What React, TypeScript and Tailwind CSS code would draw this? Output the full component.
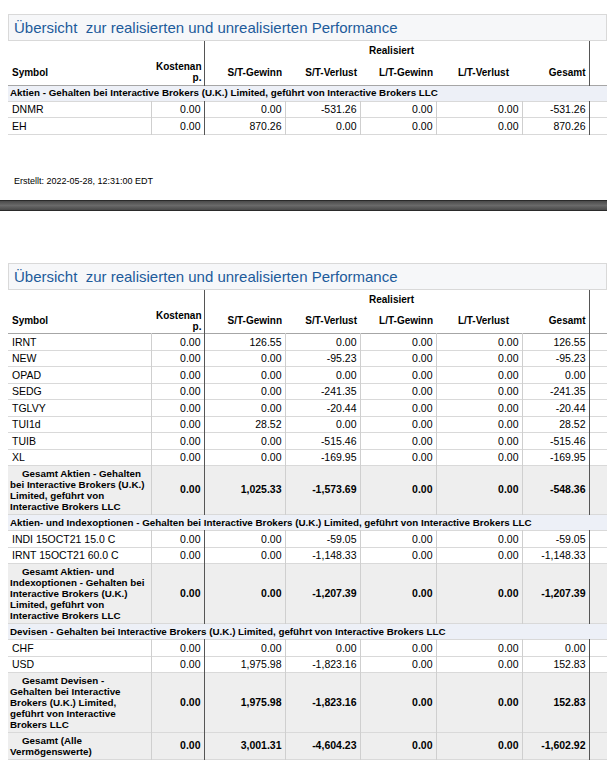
type Cells = [string, string, string, string, string, string];

type Row =
    | { kind: 'section'; label: string }
    | { kind: 'data'; symbol: string; values: Cells }
    | { kind: 'total'; lines: string[]; values: Cells };

const firstRows: Row[] = [
    { kind: 'section', label: 'Aktien - Gehalten bei Interactive Brokers (U.K.) Limited, geführt von Interactive Brokers LLC' },
    { kind: 'data', symbol: 'DNMR', values: ['0.00', '0.00', '-531.26', '0.00', '0.00', '-531.26'] },
    { kind: 'data', symbol: 'EH', values: ['0.00', '870.26', '0.00', '0.00', '0.00', '870.26'] },
];

const secondRows: Row[] = [
    { kind: 'data', symbol: 'IRNT', values: ['0.00', '126.55', '0.00', '0.00', '0.00', '126.55'] },
    { kind: 'data', symbol: 'NEW', values: ['0.00', '0.00', '-95.23', '0.00', '0.00', '-95.23'] },
    { kind: 'data', symbol: 'OPAD', values: ['0.00', '0.00', '0.00', '0.00', '0.00', '0.00'] },
    { kind: 'data', symbol: 'SEDG', values: ['0.00', '0.00', '-241.35', '0.00', '0.00', '-241.35'] },
    { kind: 'data', symbol: 'TGLVY', values: ['0.00', '0.00', '-20.44', '0.00', '0.00', '-20.44'] },
    { kind: 'data', symbol: 'TUI1d', values: ['0.00', '28.52', '0.00', '0.00', '0.00', '28.52'] },
    { kind: 'data', symbol: 'TUIB', values: ['0.00', '0.00', '-515.46', '0.00', '0.00', '-515.46'] },
    { kind: 'data', symbol: 'XL', values: ['0.00', '0.00', '-169.95', '0.00', '0.00', '-169.95'] },
    {
        kind: 'total',
        lines: ['Gesamt Aktien - Gehalten', 'bei Interactive Brokers (U.K.)', 'Limited, geführt von', 'Interactive Brokers LLC'],
        values: ['0.00', '1,025.33', '-1,573.69', '0.00', '0.00', '-548.36'],
    },
    { kind: 'section', label: 'Aktien- und Indexoptionen - Gehalten bei Interactive Brokers (U.K.) Limited, geführt von Interactive Brokers LLC' },
    { kind: 'data', symbol: 'INDI 15OCT21 15.0 C', values: ['0.00', '0.00', '-59.05', '0.00', '0.00', '-59.05'] },
    { kind: 'data', symbol: 'IRNT 15OCT21 60.0 C', values: ['0.00', '0.00', '-1,148.33', '0.00', '0.00', '-1,148.33'] },
    {
        kind: 'total',
        lines: ['Gesamt Aktien- und', 'Indexoptionen - Gehalten bei', 'Interactive Brokers (U.K.)', 'Limited, geführt von', 'Interactive Brokers LLC'],
        values: ['0.00', '0.00', '-1,207.39', '0.00', '0.00', '-1,207.39'],
    },
    { kind: 'section', label: 'Devisen - Gehalten bei Interactive Brokers (U.K.) Limited, geführt von Interactive Brokers LLC' },
    { kind: 'data', symbol: 'CHF', values: ['0.00', '0.00', '0.00', '0.00', '0.00', '0.00'] },
    { kind: 'data', symbol: 'USD', values: ['0.00', '1,975.98', '-1,823.16', '0.00', '0.00', '152.83'] },
    {
        kind: 'total',
        lines: ['Gesamt Devisen -', 'Gehalten bei Interactive', 'Brokers (U.K.) Limited,', 'geführt von Interactive', 'Brokers LLC'],
        values: ['0.00', '1,975.98', '-1,823.16', '0.00', '0.00', '152.83'],
    },
    {
        kind: 'total',
        lines: ['Gesamt (Alle', 'Vermögenswerte)'],
        values: ['0.00', '3,001.31', '-4,604.23', '0.00', '0.00', '-1,602.92'],
    },
];

const columns = [
    { label: 'S/T-Gewinn', cls: 'pr-[3px]' },
    { label: 'S/T-Verlust', cls: 'pr-[3px]' },
    { label: 'L/T-Gewinn', cls: 'pr-[3px]' },
    { label: 'L/T-Verlust', cls: 'pr-[13px]' },
    { label: 'Gesamt', cls: 'pr-[3px] border-r border-r-[#555]' },
];

// right border of each value cell: Kostenanp. and Gesamt get the dark rule
const valueBorder = [
    'border-r border-r-[#555]',
    'border-r border-r-[#cfcfcf]',
    'border-r border-r-[#cfcfcf]',
    'border-r border-r-[#cfcfcf]',
    'border-r border-r-[#cfcfcf]',
    'border-r border-r-[#555]',
];

function ReportTable({ rows }: { rows: Row[] }) {
    return (
        <div>
            <div className="h-[27px] border border-[#d9d9d9] bg-[#f6f7f9] pl-[5px] text-[15px] leading-[25px] text-[#1d5b9b]">
                Übersicht&nbsp; zur realisierten und unrealisierten Performance
            </div>
            <table className="table-fixed border-collapse w-[661px] text-black">
                <colgroup>
                    <col className="w-[143px]" />
                    <col className="w-[53px]" />
                    <col className="w-[81px]" />
                    <col className="w-[75px]" />
                    <col className="w-[76px]" />
                    <col className="w-[86px]" />
                    <col className="w-[67px]" />
                    <col className="w-[80px]" />
                </colgroup>
                <thead className="text-[10px] font-bold">
                    <tr className="h-[19px]">
                        <th colSpan={2} className="border-r border-r-[#555]" />
                        <th colSpan={5} className="border-r border-r-[#555] text-center align-middle pr-[10px] font-bold">
                            Realisiert
                        </th>
                        <th />
                    </tr>
                    <tr className="h-[25px] border-b border-b-[#a6a6a6]">
                        <th className="text-left pl-[4px] font-bold">Symbol</th>
                        <th className="text-right pr-[2px] leading-[11px] font-bold border-r border-r-[#555]">
                            Kostenan
                            <br />
                            p.
                        </th>
                        {columns.map((c) => (
                            <th key={c.label} className={`text-right font-bold ${c.cls}`}>
                                {c.label}
                            </th>
                        ))}
                        <th className="text-right pr-[4px] font-bold">S/T-Gewinn</th>
                    </tr>
                </thead>
                <tbody>
                    {rows.map((row, idx) => {
                        if (row.kind === 'section') {
                            return (
                                <tr key={idx} className="h-[16px] bg-[#edf0f7] border-b border-b-[#d9d9d9]">
                                    <td colSpan={8} className="pl-[2px] text-[9.8px] font-bold leading-[12px] whitespace-nowrap">
                                        {row.label}
                                    </td>
                                </tr>
                            );
                        }
                        if (row.kind === 'data') {
                            return (
                                <tr key={idx} className="h-[16.5px] border-b border-b-[#d9d9d9] text-[10.5px] leading-[12px]">
                                    <td className="pl-[4px] border-r border-r-[#cfcfcf] whitespace-nowrap">{row.symbol}</td>
                                    {row.values.map((v, i) => (
                                        <td key={i} className={`text-right pr-[3px] ${valueBorder[i]}`}>
                                            {v}
                                        </td>
                                    ))}
                                    <td />
                                </tr>
                            );
                        }
                        return (
                            <tr key={idx} className="bg-[#eeeeee] border-b border-b-[#d9d9d9] font-bold">
                                <td className="pl-[2px] py-[2px] border-r border-r-[#cfcfcf] text-[9.8px] leading-[11px]">
                                    {row.lines.map((l, i) => (
                                        <div key={i} className={i === 0 ? 'pl-[12px]' : ''}>
                                            {l}
                                        </div>
                                    ))}
                                </td>
                                {row.values.map((v, i) => (
                                    <td key={i} className={`text-right pr-[3px] align-middle text-[10.5px] ${valueBorder[i]}`}>
                                        {v}
                                    </td>
                                ))}
                                <td />
                            </tr>
                        );
                    })}
                </tbody>
            </table>
        </div>
    );
}

export default function App() {
    return (
        <div className="w-[607px] h-[773px] overflow-hidden bg-white font-['Liberation_Sans',Arial,sans-serif]">
            <div className="pt-[14px] pl-[8px]">
                <ReportTable rows={firstRows} />
            </div>

            <p className="mt-[40px] pl-[14px] text-[9px] leading-[12px] text-black">
                Erstellt: 2022-05-28, 12:31:00 EDT
            </p>

            {/* page break bar */}
            <div className="mt-[13px] h-[11px] border-y border-[#2a2a2a] bg-gradient-to-b from-[#4a4a4a] via-[#6a6a6a] to-[#4a4a4a]" />

            <div className="pt-[52px] pl-[8px]">
                <ReportTable rows={secondRows} />
            </div>
        </div>
    );
}
